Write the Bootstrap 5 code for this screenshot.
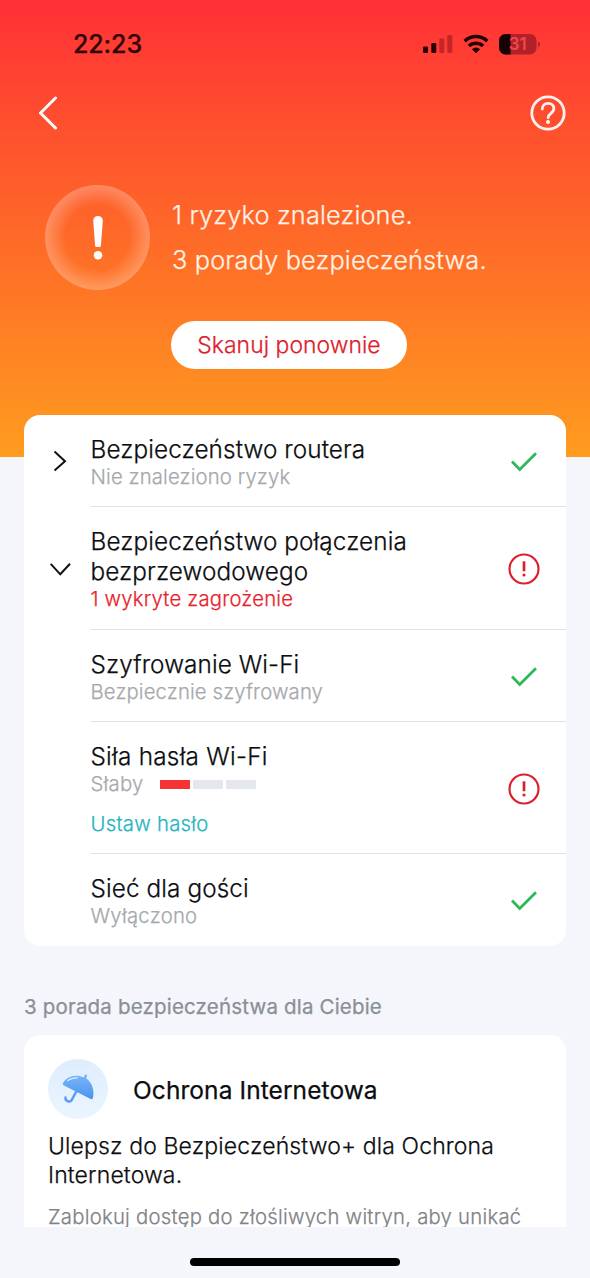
<!DOCTYPE html>
<html lang="pl">
<head>
<meta charset="utf-8">
<meta name="viewport" content="width=device-width, initial-scale=1">
<title>Bezpieczeństwo sieci</title>
<link rel="stylesheet" href="https://cdn.jsdelivr.net/npm/bootstrap@5.3.0/dist/css/bootstrap.min.css">
<style>
body{font-family:Inter,"Liberation Sans",sans-serif;background:#f4f6fb;color:#0b0d10;font-weight:300;-webkit-text-stroke:.25px currentColor}
svg{display:block;flex:none}
.screen{height:1278px}
.hero{height:457px;background:linear-gradient(#ff3036 0%,#fe5a2b 37%,#ff9c1f 100%)}
.statusbar{height:88px;padding:0 49px 0 73px}
.clock{font-size:25px;font-weight:500;color:#300508;letter-spacing:-.1px;padding-top:2px}
.topnav{height:50px;padding:0 24px 0 38px}
.summary{padding:47px 0 0 45px;gap:22px}
.orb{width:105px;height:105px;background:radial-gradient(circle,rgba(255,255,255,0) 43%,rgba(255,255,255,.28) 71%)}
.headline{font-size:25.3px;line-height:44.5px;letter-spacing:.17px;color:#fff2e6;margin-top:8px}
.scan{--bs-btn-bg:#fff;--bs-btn-color:#e01b2b;--bs-btn-border-width:0;width:236px;height:48px;margin:31px 0 0 171px;font-size:22.9px;font-weight:300;line-height:48px;letter-spacing:.05px;padding:0}
.panel{--bs-card-border-width:0;--bs-card-border-radius:16px;--bs-card-inner-border-radius:16px;margin:0 24px}
.checks{margin-top:-42px;height:531px}
.entry{padding-left:66.5px;position:relative}
.entry-body{border-bottom:1px solid #dfe1e4;padding:19px 26px 16px 0}
.entry.opened .entry-body{padding-bottom:17px}
.entry:last-child .entry-body{border:0}
.caret{position:absolute;left:24px;top:50%;margin-top:-12px}
.title{font-size:24.3px;line-height:30px;letter-spacing:.1px}
.note{font-size:20.3px;line-height:26px;letter-spacing:.13px;color:#a5a9ad}
.spaced{letter-spacing:.26px}
.alarm{color:#e81e2c;letter-spacing:.2px}
.meters{gap:3px;margin:1px 0 0 16px}
.meter{width:30px;height:9px;background:#e4e8ed}
.meter.on{background:#f63334}
.action{font-size:20.3px;line-height:26px;color:#26b5c0;text-decoration:none;margin-top:14px}
.tips{font-size:20.5px;line-height:26px;font-weight:400;letter-spacing:.18px;color:#8a8f95;margin:48px 24px 15px}
.tip{height:192px;padding:24px;border-bottom-left-radius:0;border-bottom-right-radius:0;overflow:hidden}
.bubble{width:60px;height:60px;background:linear-gradient(#deedfd,#ebf5ff)}
.tip-title{font-size:24.5px;font-weight:400;line-height:30px;letter-spacing:.08px;margin:1px 0 0 25px}
.tip-lead{font-size:23px;line-height:29px;letter-spacing:.13px;margin-top:13px}
.tip-text{font-size:20.3px;line-height:26px;letter-spacing:.25px;color:#7f8388;margin-top:14px}
.home{width:210px;height:8px;background:#000;margin:31px auto 0}
</style>
</head>
<body>
<svg width="0" height="0" class="position-absolute">
  <symbol id="ok" viewBox="0 0 32 32"><path d="M4 15.5 11.7 23.5 28 7.3" fill="none" stroke="#2eb857" stroke-width="2.8"/></symbol>
  <symbol id="warn" viewBox="0 0 32 32"><circle cx="16" cy="16" r="14.5" fill="none" stroke="#dc1f2e" stroke-width="2.2"/><path d="M16 8.3v10" stroke="#dc1f2e" stroke-width="2.7"/><circle cx="16" cy="22" r="1.6" fill="#dc1f2e"/></symbol>
</svg>
<main class="screen overflow-hidden">
  <header class="hero">
    <div class="statusbar d-flex align-items-center justify-content-between">
      <span class="clock">22:23</span>
      <div class="d-flex align-items-center">
        <svg width="30" height="20" viewBox="0 0 30 20"><rect x="0" y="12.5" width="5" height="6.5" rx="1.2" fill="#220306"/><rect x="8.3" y="9" width="5" height="10" rx="1.2" fill="#220306"/><rect x="16.3" y="4.5" width="5" height="14.5" rx="1.2" fill="#c4242a"/><rect x="24.3" y="1" width="5" height="18" rx="1.2" fill="#c4242a"/></svg>
        <svg class="ms-2 me-2" width="30" height="20" viewBox="-2 0 30 20"><g fill="none" stroke="#220306" stroke-width="3.5"><path d="M1.7 7.1a16.5 16.5 0 0 1 22.6 0"/><path d="M5.9 12a10.4 10.4 0 0 1 14.2 0"/></g><path d="M13 19.3 8.9 15.2a6 6 0 0 1 8.2 0z" fill="#220306"/></svg>
        <svg width="42" height="21" viewBox="0 0 42 21"><defs><clipPath id="cell"><rect width="37.5" height="20.5" rx="6.5"/></clipPath></defs><g clip-path="url(#cell)"><rect width="38" height="21" fill="#b1212a"/><rect width="11.5" height="21" fill="#170204"/></g><path d="M39 7.2q2 1 2 3.1t-2 3.1z" fill="#b1212a"/><text x="18.7" y="16.4" text-anchor="middle" font-family="Inter,sans-serif" font-weight="600" font-size="17" fill="#ee4a4b" stroke="none">31</text></svg>
      </div>
    </div>
    <nav class="topnav d-flex align-items-center justify-content-between">
      <svg width="20" height="34" viewBox="0 0 20 34"><path d="M17.5 2 2.5 17l15 15" fill="none" stroke="#fff" stroke-width="3" stroke-linecap="round" stroke-linejoin="round"/></svg>
      <svg width="36" height="36" viewBox="0 0 36 36"><g fill="none" stroke="#fff2ee" stroke-width="2.8"><circle cx="18" cy="18" r="16.2"/><path d="M12.3 14c0-3.4 2.3-5.7 5.8-5.7s5.8 2.2 5.8 5.2c0 2.4-1.3 3.5-3 4.8-1.8 1.4-2.8 2.3-2.8 4.5" stroke-linecap="round"/></g><circle cx="18" cy="27" r="2" fill="#fff2ee"/></svg>
    </nav>
    <section class="summary d-flex">
      <div class="orb rounded-circle d-flex align-items-center justify-content-center flex-shrink-0">
        <svg width="12" height="46" viewBox="0 0 12 46"><path d="M1.2 5.7a4.8 4.8 0 0 1 9.6 0L8.9 30.5a1.5 1.5 0 0 1-1.5 1.5H4.6a1.5 1.5 0 0 1-1.5-1.5z" fill="#fff"/><circle cx="6" cy="40.3" r="4.3" fill="#fff"/></svg>
      </div>
      <div class="headline text-nowrap"><div>1 ryzyko znalezione.</div><div>3 porady bezpieczeństwa.</div></div>
    </section>
    <button type="button" class="btn scan rounded-pill d-block">Skanuj ponownie</button>
  </header>

  <section class="card panel checks">
    <div class="entry">
      <svg class="caret" width="24" height="24" viewBox="0 0 24 24"><path d="M6.5 2.5 17 12.2 6.5 21.5" fill="none" stroke="#111" stroke-width="2"/></svg>
      <div class="entry-body d-flex align-items-center justify-content-between">
        <div><div class="title">Bezpieczeństwo routera</div><div class="note">Nie znaleziono ryzyk</div></div>
        <svg width="32" height="32"><use href="#ok"/></svg>
      </div>
    </div>
    <div class="entry opened">
      <svg class="caret" width="24" height="24" viewBox="0 0 24 24"><path d="M2.7 6.8 12.3 17.3 22 6.8" fill="none" stroke="#111" stroke-width="2"/></svg>
      <div class="entry-body d-flex align-items-center justify-content-between">
        <div><div class="title text-nowrap">Bezpieczeństwo połączenia<br>bezprzewodowego</div><div class="note alarm">1 wykryte zagrożenie</div></div>
        <svg width="32" height="32"><use href="#warn"/></svg>
      </div>
    </div>
    <div class="entry">
      <div class="entry-body d-flex align-items-center justify-content-between">
        <div><div class="title">Szyfrowanie Wi-Fi</div><div class="note">Bezpiecznie szyfrowany</div></div>
        <svg width="32" height="32"><use href="#ok"/></svg>
      </div>
    </div>
    <div class="entry">
      <div class="entry-body d-flex align-items-center justify-content-between">
        <div>
          <div class="title spaced">Siła hasła Wi-Fi</div>
          <div class="note spaced d-flex align-items-center">Słaby<span class="meters d-flex"><i class="meter on"></i><i class="meter"></i><i class="meter"></i></span></div>
          <a href="#" class="action spaced d-block">Ustaw hasło</a>
        </div>
        <svg width="32" height="32"><use href="#warn"/></svg>
      </div>
    </div>
    <div class="entry">
      <div class="entry-body d-flex align-items-center justify-content-between">
        <div><div class="title">Sieć dla gości</div><div class="note spaced">Wyłączono</div></div>
        <svg width="32" height="32"><use href="#ok"/></svg>
      </div>
    </div>
  </section>

  <h2 class="tips">3 porada bezpieczeństwa dla Ciebie</h2>
  <section class="card panel tip">
    <div class="d-flex align-items-center">
      <div class="bubble rounded-circle d-flex align-items-center justify-content-center">
        <svg width="32" height="32" viewBox="0 0 32 32"><defs><linearGradient id="blue" x2="0" y2="1"><stop stop-color="#7ab6f9"/><stop offset="1" stop-color="#4b93f0"/></linearGradient></defs><path d="M.8 10.6C4 3.5 14 .5 21.8 4.4L22.6 2.4Q23.2 1.1 24.3 1.5 25.4 2.1 24.9 3.3L24.2 5.6C30.5 9.8 32.6 17.5 30.9 25Q30.4 26.8 28.7 26L1.5 12.2Q.4 11.6.8 10.6Z" fill="url(#blue)"/><path d="M14.5 18 9.8 26.8C8.2 29.9 2.9 28.4 3.5 24.5" fill="none" stroke="#5a9ff3" stroke-width="2.5" stroke-linecap="round"/><path d="M5.8 7.6Q9.5 4.7 15.5 4.9" fill="none" stroke="#d9ebff" stroke-width="1.3" stroke-linecap="round"/></svg>
      </div>
      <div class="tip-title">Ochrona Internetowa</div>
    </div>
    <div class="tip-lead text-nowrap">Ulepsz do Bezpieczeństwo+ dla Ochrona<br>Internetowa.</div>
    <div class="tip-text text-nowrap">Zablokuj dostęp do złośliwych witryn, aby unikać</div>
  </section>
  <div class="home rounded-pill"></div>
</main>
<script src="https://cdn.jsdelivr.net/npm/bootstrap@5.3.0/dist/js/bootstrap.bundle.min.js"></script>
</body>
</html>
